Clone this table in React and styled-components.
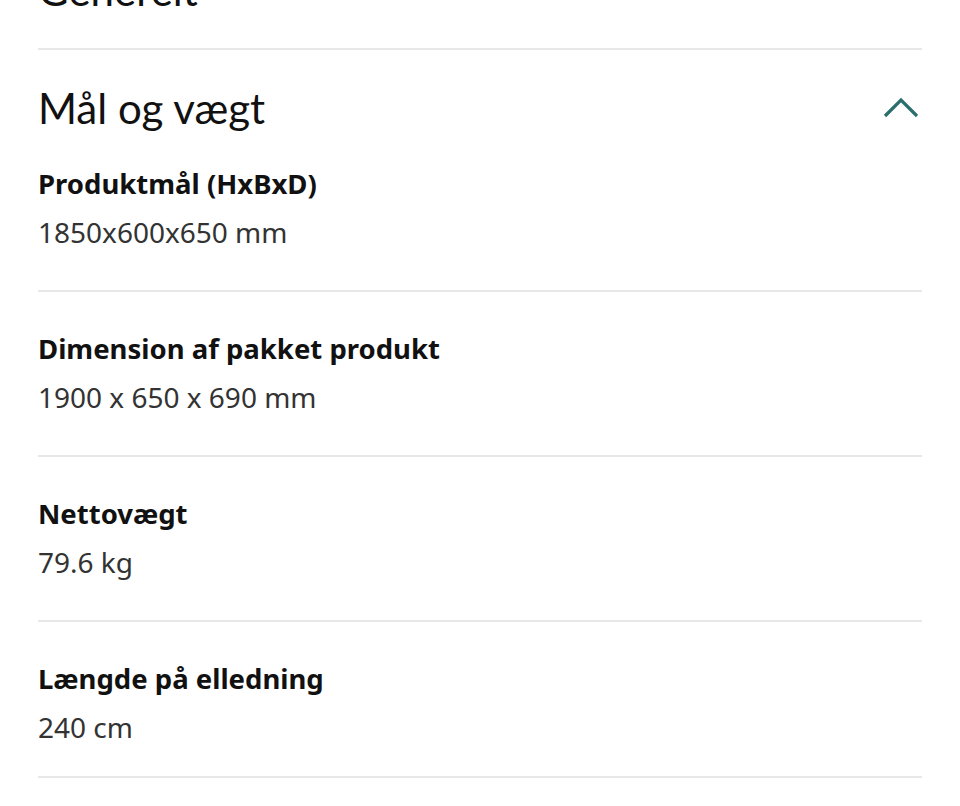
import React from 'react';
import styled, { createGlobalStyle } from 'styled-components';

const GlobalStyle = createGlobalStyle`
  html, body {
    margin: 0;
    padding: 0;
    background: #fff;
    overflow: hidden;
  }
`;

/** PAGE **/
const Page = styled.div`
  width: 960px;
  height: 806px;
  overflow: hidden;
  background: #fff;
  padding: 0 38px;
  box-sizing: border-box;
`;

const List = styled.div`
  margin-top: -68px;
`;

/** ACCORDION **/
const Section = styled.section`
  border-bottom: 2px solid #e8e8e8;
`;

const Header = styled.div`
  display: flex;
  align-items: center;
  justify-content: space-between;
  padding: 33px 0 ${(p) => (p.$open ? '27px' : '33px')};
`;

const Title = styled.h2`
  margin: 0;
  font-family: Lato, 'Noto Sans', sans-serif;
  font-weight: 400;
  font-size: 42px;
  line-height: 50px;
  color: #111;
`;

const Chevron = styled.svg`
  width: 38px;
  height: 24px;
  margin-right: 2px;
  color: #2b6f6d;
  transform: ${(p) => (p.$open ? 'none' : 'rotate(180deg)')};
`;

/** SPEC ROWS **/
const Row = styled.div`
  padding: 33px 0 34px;
  border-bottom: 2px solid #e8e8e8;

  &:first-child {
    padding-top: 0;
  }

  &:last-child {
    padding-bottom: 25px;
    border-bottom: none;
  }
`;

const Label = styled.div`
  font-family: 'Noto Sans', 'DejaVu Sans', sans-serif;
  font-weight: 700;
  font-size: 27.5px;
  line-height: 48px;
  color: #111;
`;

const Value = styled.div`
  font-family: 'Noto Sans', 'DejaVu Sans', sans-serif;
  font-weight: 400;
  font-size: 28px;
  line-height: 48px;
  color: #333;
`;

const specs = [
  { label: 'Produktmål (HxBxD)', value: '1850x600x650 mm' },
  { label: 'Dimension af pakket produkt', value: '1900 x 650 x 690 mm' },
  { label: 'Nettovægt', value: '79.6 kg' },
  { label: 'Længde på elledning', value: '240 cm' },
];

function ChevronIcon({ open }) {
  return (
    <Chevron $open={open} viewBox="0 0 38 24" fill="none">
      <path d="M3 20 L19 4 L35 20" stroke="currentColor" strokeWidth="3.2" />
    </Chevron>
  );
}

export default function App() {
  return (
    <Page>
      <GlobalStyle />
      <List>
        <Section>
          <Header>
            <Title>Generelt</Title>
            <ChevronIcon open={false} />
          </Header>
        </Section>
        <Section>
          <Header $open>
            <Title>Mål og vægt</Title>
            <ChevronIcon open />
          </Header>
          <div>
            {specs.map((s) => (
              <Row key={s.label}>
                <Label>{s.label}</Label>
                <Value>{s.value}</Value>
              </Row>
            ))}
          </div>
        </Section>
      </List>
    </Page>
  );
}
